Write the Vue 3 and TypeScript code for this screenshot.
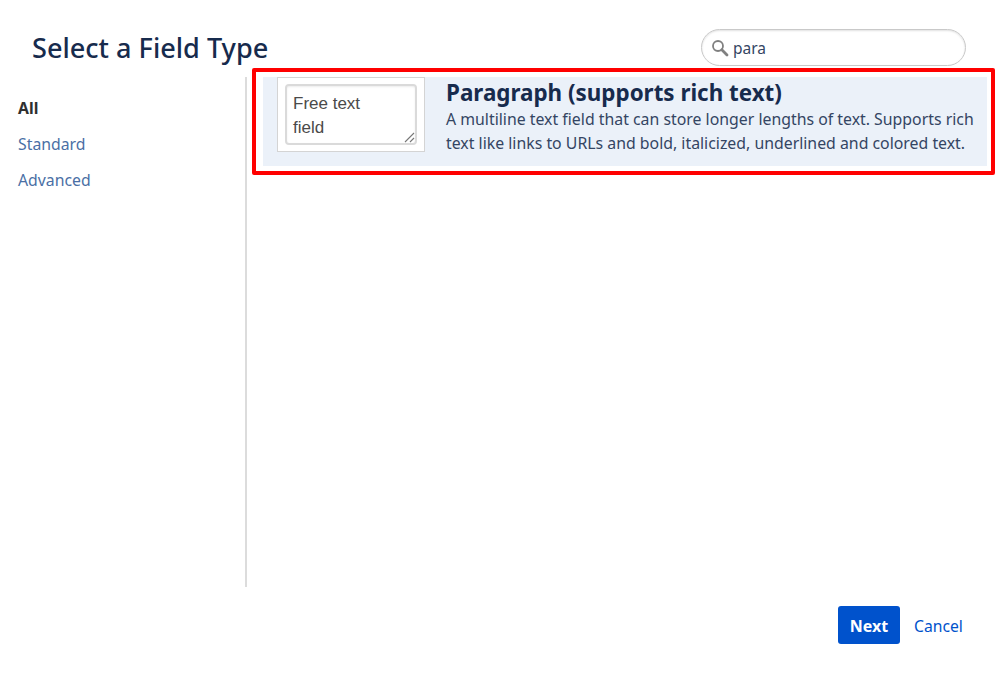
<script setup lang="ts">
const categories = [
  { label: 'All', active: true },
  { label: 'Standard', active: false },
  { label: 'Advanced', active: false },
]
</script>

<template>
  <div class="dialog">
    <header class="dialog__header">
      <h1 class="dialog__title">Select a Field Type</h1>
      <div class="search">
        <svg class="search__icon" width="18" height="18" viewBox="0 0 18 18" fill="none">
          <circle cx="7" cy="7" r="5" stroke="#808080" stroke-width="1.8" />
          <path d="M10.8 10.8L16 16" stroke="#808080" stroke-width="2.8" stroke-linecap="round" />
        </svg>
        <span class="search__text">para</span>
      </div>
    </header>

    <div class="dialog__body">
      <nav class="sidebar">
        <a
          v-for="item in categories"
          :key="item.label"
          :class="['sidebar__link', { 'sidebar__link--active': item.active }]"
        >{{ item.label }}</a>
      </nav>

      <main class="results">
        <div class="field">
          <div class="field__thumb">
            <div class="fake-textarea">
              <span>Free text</span>
              <span>field</span>
              <svg class="fake-textarea__grip" width="11" height="11" viewBox="0 0 11 11">
                <path d="M1 10L10 1M6 10L10 6" stroke="#777" stroke-width="1.1" />
              </svg>
            </div>
          </div>
          <div class="field__info">
            <h2 class="field__name">Paragraph (supports rich text)</h2>
            <p class="field__desc">A multiline text field that can store longer lengths of text. Supports rich text like links to URLs and bold, italicized, underlined and colored text.</p>
          </div>
        </div>
        <div class="annotation"></div>
      </main>
    </div>

    <footer class="dialog__footer">
      <button class="btn-next" type="button">Next</button>
      <a class="btn-cancel">Cancel</a>
    </footer>
  </div>
</template>

<style>
html,
body {
  background: #fff;
}
</style>

<style scoped>
.dialog {
  width: 999px;
  height: 687px;
  display: flex;
  flex-direction: column;
  font-family: 'Noto Sans', 'Open Sans', sans-serif;
  color: #172b4d;
  overflow: hidden;
}

.dialog__header {
  height: 77px;
  flex: none;
  display: flex;
  justify-content: space-between;
  padding: 29px 33px 0 32px;
  box-sizing: border-box;
}

.dialog__title {
  margin: 0;
  font-size: 27.1px;
  line-height: 38px;
  font-weight: 500;
  color: #172b4d;
}

.search {
  width: 265px;
  height: 37px;
  box-sizing: border-box;
  border: 1px solid #c9c9c9;
  border-radius: 19px;
  box-shadow: inset 0 1px 2px rgba(0, 0, 0, 0.12);
  display: flex;
  align-items: center;
  padding-left: 9px;
  gap: 4px;
}

.search__icon {
  flex: none;
}

.search__text {
  font-size: 15.5px;
  color: #344563;
}

.dialog__body {
  height: 510px;
  flex: none;
  display: flex;
}

.sidebar {
  width: 247px;
  flex: none;
  box-sizing: border-box;
  border-right: 2px solid #dcdcdc;
  padding: 19px 0 0 18px;
  display: flex;
  flex-direction: column;
  gap: 12px;
}

.sidebar__link {
  font-size: 15.8px;
  line-height: 24px;
  color: #4a6fa5;
}

.sidebar__link--active {
  font-weight: 700;
  color: #2f2f2f;
}

.results {
  flex: 1;
  position: relative;
  padding: 0 12px 0 16px;
}

.field {
  height: 89px;
  box-sizing: border-box;
  display: flex;
  background: #ebf1f9;
  padding-left: 14px;
}

.field__thumb {
  width: 148px;
  height: 75px;
  box-sizing: border-box;
  flex: none;
  background: #fff;
  border: 1px solid #d4d4d4;
  padding: 6px 7px;
}

.fake-textarea {
  position: relative;
  height: 61px;
  box-sizing: border-box;
  background: #fff;
  border: 2px solid #dadada;
  border-radius: 4px;
  box-shadow: inset 0 1px 2px rgba(0, 0, 0, 0.08);
  padding: 6px 6px;
  display: flex;
  flex-direction: column;
  font-family: 'Liberation Sans', Arial, sans-serif;
  font-size: 17px;
  line-height: 24px;
  color: #4a4a4a;
}

.fake-textarea__grip {
  position: absolute;
  right: 0;
  bottom: 0;
}

.field__info {
  margin-left: 21px;
  min-width: 0;
}

.field__name {
  margin: 0;
  padding-top: 1px;
  font-size: 22.4px;
  line-height: 29px;
  font-weight: 700;
  color: #172b4d;
}

.field__desc {
  margin: 0;
  font-size: 15.85px;
  line-height: 24px;
  color: #344563;
}

.annotation {
  position: absolute;
  left: 5px;
  top: -9px;
  width: 743px;
  height: 107px;
  box-sizing: border-box;
  border: 4px solid #ff0000;
  border-radius: 2px;
}

.dialog__footer {
  flex: none;
  display: flex;
  align-items: center;
  padding: 19px 0 0 838px;
}

.btn-next {
  width: 62px;
  height: 38px;
  border: none;
  border-radius: 3px;
  background: #0052cc;
  color: #fff;
  font-family: inherit;
  font-size: 16px;
  font-weight: 700;
  padding: 2px 0 0;
}

.btn-cancel {
  margin-left: 14px;
  padding-top: 1px;
  font-size: 15.7px;
  color: #0052cc;
}
</style>
